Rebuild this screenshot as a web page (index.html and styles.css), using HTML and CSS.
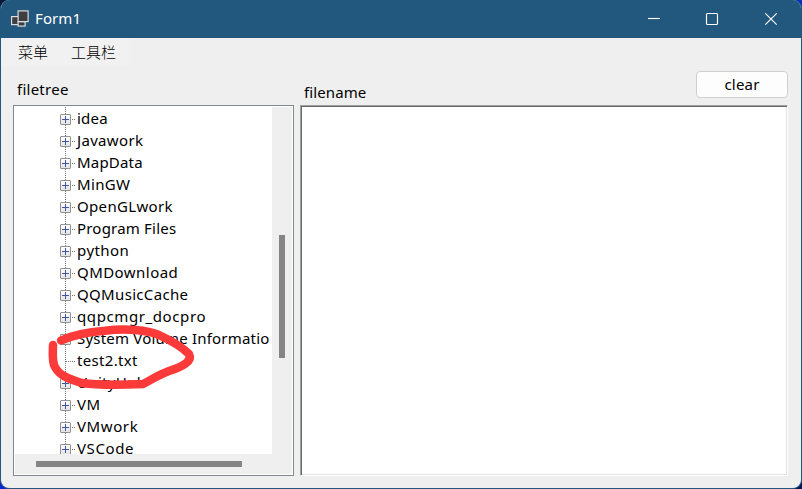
FILE: index.html
```
<!DOCTYPE html>
<html lang="zh-CN">
<head>
<meta charset="utf-8">
<title>Form1</title>
<link rel="stylesheet" href="styles.css">
</head>
<body>
<div class="window">
  <header class="titlebar">
    <svg class="app-icon" width="18" height="18" viewBox="0 0 18 18">
      <g fill="#3e3e40" stroke="#d9dde0" stroke-width="1.2">
        <rect x=".6" y="6.6" width="7.5" height="8"/>
        <rect x="7.1" y="11.6" width="7" height="4.5"/>
        <rect x="7.1" y=".9" width="10" height="10.7"/>
      </g>
    </svg>
    <span class="title">Form1</span>
    <div class="controls">
      <svg width="58" height="38" viewBox="0 0 58 38"><path d="M19 18.5h12"/></svg>
      <svg width="58" height="38" viewBox="0 0 58 38"><rect x="19.5" y="13.5" width="11" height="11" rx="1"/></svg>
      <svg width="58" height="38" viewBox="0 0 58 38"><path d="M20.3 13.3l11.4 11.4M31.7 13.3L20.3 24.7"/></svg>
    </div>
  </header>
  <nav class="menubar">
    <span class="menu">菜单</span>
    <span class="menu">工具栏</span>
  </nav>
  <main class="form">
    <section class="left">
      <label class="tree-label">filetree</label>
      <div class="tree">
        <ul class="nodes">
          <li><i class="box"></i><span>idea</span></li>
          <li><i class="box"></i><span class="wide">Javawork</span></li>
          <li><i class="box"></i><span>MapData</span></li>
          <li><i class="box"></i><span class="wide">MinGW</span></li>
          <li><i class="box"></i><span class="wide">OpenGLwork</span></li>
          <li><i class="box"></i><span>Program Files</span></li>
          <li><i class="box"></i><span class="wider">python</span></li>
          <li><i class="box"></i><span class="wider">QMDownload</span></li>
          <li><i class="box"></i><span class="wide">QQMusicCache</span></li>
          <li><i class="box"></i><span class="widest">qqpcmgr_docpro</span></li>
          <li><i class="box"></i><span>System Volume Informatio</span></li>
          <li class="leaf"><i class="box"></i><span class="wide">test2.txt</span></li>
          <li><i class="box"></i><span class="wide">UnityHub</span></li>
          <li><i class="box"></i><span class="widest">VM</span></li>
          <li><i class="box"></i><span class="widest">VMwork</span></li>
          <li><i class="box"></i><span class="widest">VSCode</span></li>
        </ul>
        <div class="vscroll"><div class="vthumb"></div></div>
        <div class="hscroll"><div class="hthumb"></div></div>
      </div>
    </section>
    <section class="right">
      <div class="file-row">
        <label class="file-label">filename</label>
        <button class="clear">clear</button>
      </div>
      <div class="textbox"></div>
    </section>
  </main>
</div>
<svg class="marker" width="160" height="80" viewBox="40 320 160 80">
  <path d="M61 340.500C75 334 88 332 105 330.700C126 328 147 330 159 335C172 341 181 346 189 354C193 361 182 367 169 371C158 375 151 380 143 384C122 385 96 385 82 383C68 379 58 375 54 365C52 358 53 351 53 345"/>
</svg>
</body>
</html>
```
FILE: styles.css
```
* { box-sizing: border-box; }
body {
  margin: 0;
  width: 802px;
  height: 489px;
  overflow: hidden;
  background: linear-gradient(90deg, #08163c 0 50%, #0535b8 50%) top / 100% 50% no-repeat,
              linear-gradient(90deg, #0a24d0 0 50%, #03154f 50%) bottom / 100% 50% no-repeat;
  font: 15px/22px "Noto Sans", "Noto Sans CJK SC", sans-serif;
  color: #000;
}
.window {
  height: 489px;
  display: flex;
  flex-direction: column;
  border: 1px solid #22577e;
  border-top: 0;
  border-radius: 9px;
  overflow: hidden;
  background: #efefef;
}
.titlebar {
  height: 38px;
  flex: none;
  display: flex;
  align-items: center;
  padding-left: 10px;
  background: #22577e;
  color: #fff;
}
.app-icon { margin-right: 6px; }
.title { position: relative; top: -1px; letter-spacing: .1px; }
.controls { display: flex; margin-left: auto; margin-right: -2px; }
.controls svg { fill: none; stroke: #fff; stroke-width: 1.15; }
.menubar {
  height: 28px;
  flex: none;
  display: flex;
  gap: 23px;
  width: 129px;
  padding: 3px 0 0 17px;
  background: #f1f1f1;
}
.menu { white-space: nowrap; font-family: "Noto Sans CJK SC", sans-serif; font-weight: 300; }
.form {
  flex: 1;
  display: grid;
  grid-template-columns: 281px 488px;
  column-gap: 6px;
  padding: 0 0 0 12px;
}
.left, .right { display: flex; flex-direction: column; }
.tree-label { height: 39px; padding: 12px 0 0 4px; letter-spacing: .25px; }
.tree {
  height: 371px;
  display: grid;
  grid-template: 347px 20px / 257px 20px;
  padding: 1px;
  border: 1px solid #828790;
  background: #fff;
}
.nodes {
  margin: 0;
  padding: 0 0 0 45px;
  list-style: none;
  overflow: hidden;
  white-space: nowrap;
  letter-spacing: .2px;
}
.nodes li {
  height: 22px;
  display: flex;
  align-items: center;
  background: repeating-linear-gradient(#777 0 1px, transparent 1px 2px) 5px 0 / 1px 100% no-repeat,
              repeating-linear-gradient(90deg, #777 0 1px, transparent 1px 2px) 6px 12px / 9px 1px no-repeat;
}
.nodes .wide { letter-spacing: .33px; }
.nodes .wider { letter-spacing: .45px; }
.nodes .widest { letter-spacing: .6px; }
.box {
  width: 11px;
  height: 11px;
  flex: none;
  margin: 2px 6px 0 0;
  border: 1px solid #919191;
  border-radius: 1px;
  background: linear-gradient(#3e56a0, #3e56a0) center / 7px 1px no-repeat,
              linear-gradient(#3e56a0, #3e56a0) center / 1px 7px no-repeat,
              linear-gradient(#fff, #e3e3e3);
}
.leaf .box { visibility: hidden; }
.vscroll, .hscroll { background: #efefef; }
.vscroll { padding: 128px 0 0 7px; }
.vthumb { width: 6px; height: 123px; background: #858585; }
.hscroll { grid-column: 1 / 3; padding: 7px 0 0 21px; }
.hthumb { width: 206px; height: 6px; background: #858585; }
.file-row {
  height: 39px;
  display: flex;
  justify-content: space-between;
  padding: 5px 0 0 4px;
}
.file-label { padding-top: 10px; letter-spacing: .1px; }
.clear {
  width: 92px;
  height: 27px;
  padding: 0 0 2px;
  border: 1px solid #d0d0d0;
  border-radius: 4px;
  background: #fdfdfd;
  font: inherit;
  letter-spacing: .2px;
  color: #000;
}
.textbox {
  height: 371px;
  background: #fff;
  border: 1px solid;
  border-color: #a0a0a0 #fff #fff #a0a0a0;
  box-shadow: inset 1px 1px #696969, inset -1px -1px #e3e3e3;
}
.marker {
  position: absolute;
  left: 40px;
  top: 320px;
  fill: none;
  stroke: #fd3a3a;
  stroke-width: 8.5;
  stroke-linecap: round;
  stroke-linejoin: round;
}
```
